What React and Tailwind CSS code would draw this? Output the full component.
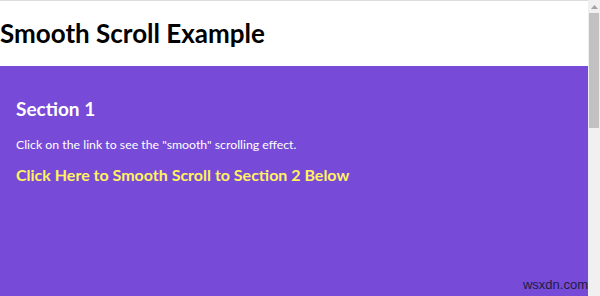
export default function App() {
  return (
    <div className="flex h-[296px] w-[600px] overflow-hidden bg-white font-['Lato',sans-serif]">
      <div className="flex flex-1 flex-col">
        <div className="h-px bg-[#dcdcdc]" />
        <header className="flex h-[65px] items-center">
          <h1 className="text-[26px] font-bold text-black">Smooth Scroll Example</h1>
        </header>
        <section className="relative flex-1 bg-[#774bd8] px-4 pt-[31px] text-white">
          <h2 className="text-[19px] font-bold leading-[24px]">Section 1</h2>
          <p className="mt-[16px] text-[12.3px] leading-[16px]">
            Click on the link to see the "smooth" scrolling effect.
          </p>
          <a href="#section2" className="mt-[12px] block text-[16px] font-bold leading-[20px] text-[#fff35f]">
            Click Here to Smooth Scroll to Section 2 Below
          </a>
          <span className="absolute bottom-[2px] right-0 font-['Liberation_Sans',sans-serif] text-[13px] text-[#1c1c40]">
            wsxdn.com
          </span>
        </section>
      </div>
      <div className="flex w-[12px] flex-col bg-[#f0f0f0]">
        <div className="flex h-[13px] items-center justify-center">
          <svg width="7" height="4" viewBox="0 0 7 4">
            <path d="M0 4 L3.5 0 L7 4 Z" fill="#a3a3a3" />
          </svg>
        </div>
        <div className="mx-[1px] h-[115px] bg-[#c1c1c1]" />
      </div>
    </div>
  );
}
